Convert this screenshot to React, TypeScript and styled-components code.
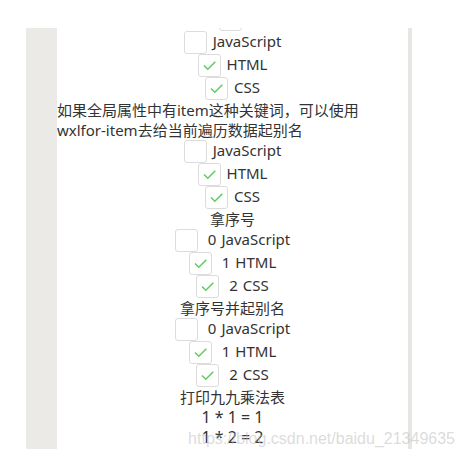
import React from 'react';
import styled, { createGlobalStyle } from 'styled-components';

const GlobalStyle = createGlobalStyle`
  * { box-sizing: border-box; }
  body {
    margin: 0;
    background: #fff;
    color: #333;
    font-family: "Noto Sans", "Noto Sans CJK SC", sans-serif;
    font-size: 15px;
    line-height: 20px;
  }
`;

const Page = styled.main`
  position: relative;
  padding: 28px 52px 8px 26px;
`;

const Simulator = styled.section`
  overflow: hidden;
  border-left: 31px solid #ebeae6;
  border-right: 4px solid #e6e7e2;
  padding-bottom: 2px;
`;

const Peek = styled.div`
  display: flex;
  align-items: flex-end;
  justify-content: center;
  height: 3px;
  overflow: hidden;
  padding-right: 5px;
`;

const Note = styled.p<{ $align?: 'left' | 'center' }>`
  margin: 0;
  text-align: ${(p) => p.$align ?? 'center'};
`;

const List = styled.ul`
  margin: 0;
  padding: 0;
  list-style: none;
`;

const Item = styled.li`
  display: flex;
  justify-content: center;
  height: 23px;
`;

const Label = styled.label<{ $gap: number }>`
  display: flex;
  align-items: flex-start;
  gap: ${(p) => p.$gap}px;
`;

const Caption = styled.span`
  display: flex;
  gap: 5px;
`;

const Tick = styled.span`
  display: grid;
  flex: none;
  place-items: center;

  > * { grid-area: 1 / 1; }
  svg { pointer-events: none; }
`;

const Box = styled.input`
  appearance: none;
  width: 23px;
  height: 23px;
  margin: 0;
  border: 1px solid #dcdcdc;
  border-radius: 3px;
  background: #fff;
`;

const Equation = styled.p`
  margin: 0;
  font-size: 16px;
  text-align: center;
`;

const Watermark = styled.span`
  position: absolute;
  right: 9px;
  bottom: 8px;
  color: rgba(190, 190, 190, 0.55);
  font-family: "Liberation Sans", sans-serif;
  font-size: 16px;
  pointer-events: none;
`;

function Checkbox({ checked }: { checked: boolean }) {
  return (
    <Tick>
      <Box type="checkbox" defaultChecked={checked} />
      {checked && (
        <svg width="23" height="23" viewBox="0 0 23 23" fill="none" aria-hidden="true">
          <path d="M6 11.5 L9.8 15.3 L17.3 7.8" stroke="#5ecb62" strokeWidth="1.5" />
        </svg>
      )}
    </Tick>
  );
}

const languages = [
  { name: 'JavaScript', checked: false },
  { name: 'HTML', checked: true },
  { name: 'CSS', checked: true },
];

function Languages({ numbered = false }: { numbered?: boolean }) {
  return (
    <List>
      {languages.map(({ name, checked }, index) => (
        <Item key={name}>
          <Label $gap={numbered ? 10 : 6}>
            <Checkbox checked={checked} />
            <Caption>
              {numbered && <span>{index}</span>}
              <span>{name}</span>
            </Caption>
          </Label>
        </Item>
      ))}
    </List>
  );
}

export default function App() {
  return (
    <>
      <GlobalStyle />
      <Page>
        <Simulator>
          <Peek>
            <Box type="checkbox" aria-label="选项" />
          </Peek>
          <Languages />
          <Note $align="left">
            如果全局属性中有item这种关键词，可以使用
            <br />
            wxlfor-item去给当前遍历数据起别名
          </Note>
          <Languages />
          <Note>拿序号</Note>
          <Languages numbered />
          <Note>拿序号并起别名</Note>
          <Languages numbered />
          <Note>打印九九乘法表</Note>
          <Equation>1 * 1 = 1</Equation>
          <Equation>1 * 2 = 2</Equation>
        </Simulator>
        <Watermark>https://blog.csdn.net/baidu_21349635</Watermark>
      </Page>
    </>
  );
}
